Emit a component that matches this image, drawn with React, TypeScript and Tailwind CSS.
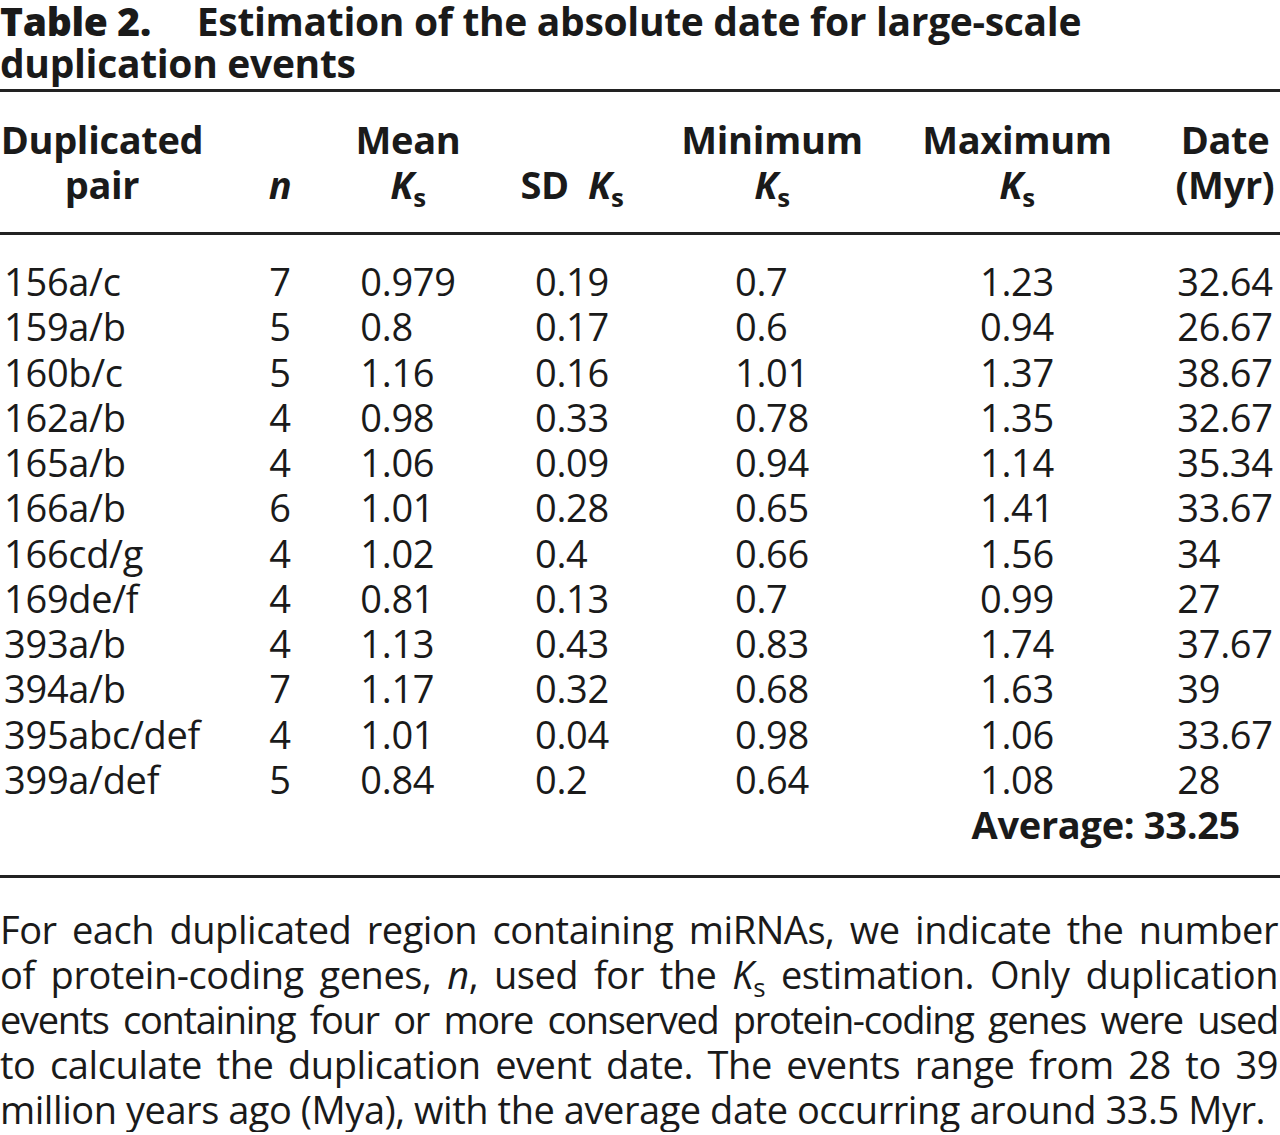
import type { ReactNode } from 'react'

const rows: string[][] = [
  ['156a/c', '7', '0.979', '0.19', '0.7', '1.23', '32.64'],
  ['159a/b', '5', '0.8', '0.17', '0.6', '0.94', '26.67'],
  ['160b/c', '5', '1.16', '0.16', '1.01', '1.37', '38.67'],
  ['162a/b', '4', '0.98', '0.33', '0.78', '1.35', '32.67'],
  ['165a/b', '4', '1.06', '0.09', '0.94', '1.14', '35.34'],
  ['166a/b', '6', '1.01', '0.28', '0.65', '1.41', '33.67'],
  ['166cd/g', '4', '1.02', '0.4', '0.66', '1.56', '34'],
  ['169de/f', '4', '0.81', '0.13', '0.7', '0.99', '27'],
  ['393a/b', '4', '1.13', '0.43', '0.83', '1.74', '37.67'],
  ['394a/b', '7', '1.17', '0.32', '0.68', '1.63', '39'],
  ['395abc/def', '4', '1.01', '0.04', '0.98', '1.06', '33.67'],
  ['399a/def', '5', '0.84', '0.2', '0.64', '1.08', '28'],
]

function Ks() {
  return (
    <span className="whitespace-nowrap">
      <i>K</i>
      <sub className="text-[0.68em] -bottom-[0.32em]">s</sub>
    </span>
  )
}

const heads: ReactNode[][] = [
  ['Duplicated', 'pair'],
  [<i key="n">n</i>],
  ['Mean', <Ks key="k" />],
  [<span key="sd">SD&nbsp;&nbsp;<Ks /></span>],
  ['Minimum', <Ks key="k" />],
  ['Maximum', <Ks key="k" />],
  ['Date', '(Myr)'],
]

// footnote lines, broken as in the printed table
const note: ReactNode[] = [
  'For each duplicated region containing miRNAs, we indicate the number',
  <>of protein-coding genes, <i>n</i>, used for the <Ks /> estimation. Only duplication</>,
  'events containing four or more conserved protein-coding genes were used',
  'to calculate the duplication event date. The events range from 28 to 39',
  'million years ago (Mya), with the average date occurring around 33.5 Myr.',
]

const cols = 'grid grid-cols-[204px_152px_104px_224px_176px_314px_102px]'

export default function App() {
  return (
    <div
      className="w-[1280px] bg-white text-[#1a1a1a] tracking-[-0.02em]"
      style={{ fontFamily: '"Open Sans", "Noto Sans", sans-serif' }}
    >
      <h1 className="text-[39px] leading-[42px] font-bold">
        <span className="font-extrabold">Table 2.</span>
        <span className="ml-[46px]">Estimation of the absolute date for large-scale</span>
        <br />
        duplication events
      </h1>

      <div className="mt-[5px] h-[3px] bg-[#222]" />

      <div className={`${cols} mt-[25px] text-[38px] leading-[45px] font-bold`}>
        {heads.map((h, i) => (
          <div key={i} className="h-[90px] flex flex-col justify-end items-center whitespace-nowrap">
            {h.map((line, j) => (
              <div key={j}>{line}</div>
            ))}
          </div>
        ))}
      </div>

      <div className="mt-[25px] h-[3px] bg-[#222]" />

      <div className={`${cols} mt-[24px] text-[38px] leading-[45px]`}>
        {heads.map((_, i) => (
          <div key={i} className="flex flex-col items-center">
            <div className="flex flex-col items-start whitespace-nowrap">
              {rows.map(r => (
                <div key={r[0]} className="h-[45.25px]">{r[i]}</div>
              ))}
            </div>
          </div>
        ))}
      </div>
      <div className="flex justify-end pr-[40px] text-[38px] leading-[45px] font-bold">Average: 33.25</div>

      <div className="mt-[28px] h-[3px] bg-[#222]" />

      <div className="mt-[29px] pr-[2px] text-[38px] leading-[45px] tracking-[-0.012em]">
        {note.map((line, i) => (
          <div
            key={i}
            className={
              i === note.length - 1
                ? 'whitespace-nowrap'
                : i === 2
                  ? 'text-justify [text-align-last:justify] whitespace-nowrap tracking-[-0.035em]'
                  : 'text-justify [text-align-last:justify] whitespace-nowrap'
            }
          >
            {line}
          </div>
        ))}
      </div>
    </div>
  )
}
